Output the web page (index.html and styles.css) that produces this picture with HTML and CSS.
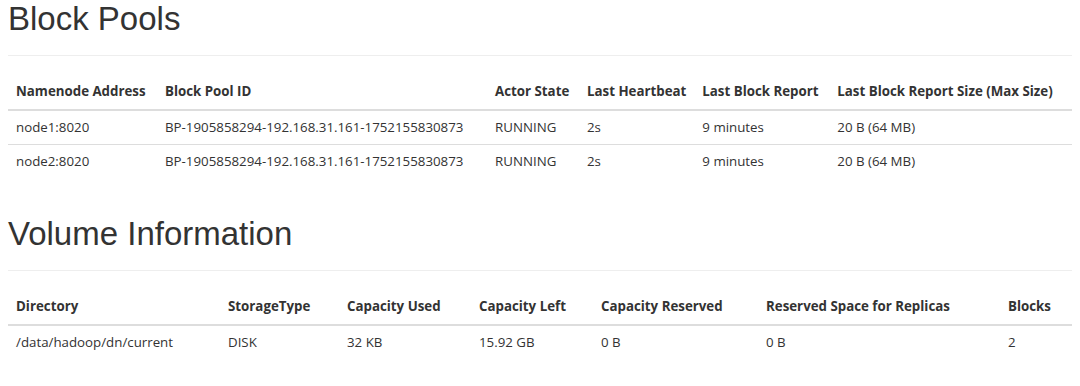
FILE: index.html
```html
<!DOCTYPE html>
<html>
<head>
<meta charset="utf-8">
<link rel="stylesheet" href="styles.css">
</head>
<body>
<div class="page">
  <div class="page-header"><h1>Block Pools</h1></div>
  <table class="tbl pools">
    <thead>
      <tr>
        <th class="c-nn">Namenode Address</th>
        <th class="c-bp">Block Pool ID</th>
        <th class="c-as">Actor State</th>
        <th class="c-hb">Last Heartbeat</th>
        <th class="c-br">Last Block Report</th>
        <th class="c-sz">Last Block Report Size (Max Size)</th>
      </tr>
    </thead>
    <tbody>
      <tr><td>node1:8020</td><td>BP-1905858294-192.168.31.161-1752155830873</td><td>RUNNING</td><td>2s</td><td>9 minutes</td><td>20 B (64 MB)</td></tr>
      <tr><td>node2:8020</td><td>BP-1905858294-192.168.31.161-1752155830873</td><td>RUNNING</td><td>2s</td><td>9 minutes</td><td>20 B (64 MB)</td></tr>
    </tbody>
  </table>

  <div class="page-header second"><h1>Volume Information</h1></div>
  <table class="tbl volumes">
    <thead>
      <tr>
        <th class="c-dir">Directory</th>
        <th class="c-st">StorageType</th>
        <th class="c-cu">Capacity Used</th>
        <th class="c-cl">Capacity Left</th>
        <th class="c-cr">Capacity Reserved</th>
        <th class="c-rs">Reserved Space for Replicas</th>
        <th class="c-bl">Blocks</th>
      </tr>
    </thead>
    <tbody>
      <tr><td>/data/hadoop/dn/current</td><td>DISK</td><td>32 KB</td><td>15.92 GB</td><td>0 B</td><td>0 B</td><td>2</td></tr>
    </tbody>
  </table>
</div>
</body>
</html>
```

FILE: styles.css
```css
html, body {
  margin: 0;
  padding: 0;
  background: #fff;
}

.page {
  padding: 0 8px;
  font-family: "Open Sans", "Liberation Sans", sans-serif;
  font-size: 13.3px;
  color: #333;
}

.page-header {
  border-bottom: 1px solid #eee;
  padding-bottom: 17px;
  margin-bottom: 17px;
}

.page-header.second {
  margin-top: 37px;
}

.page-header h1 {
  margin: 0;
  font-family: "Liberation Sans", Arial, sans-serif;
  font-weight: normal;
  font-size: 33px;
  line-height: 38px;
  color: #333;
}

.tbl {
  width: 100%;
  border-collapse: collapse;
  border-spacing: 0;
}

.tbl th {
  text-align: left;
  font-weight: bold;
  padding: 8px;
  line-height: 20px;
  white-space: nowrap;
  border-bottom: 2px solid #ddd;
  vertical-align: bottom;
}

.tbl td {
  padding: 6px 8px 7px;
  line-height: 20px;
  white-space: nowrap;
  border-top: 1px solid #ddd;
  vertical-align: top;
}

.tbl tbody tr:first-child td {
  border-top: 0;
}

.c-nn { width: 133px; }
.c-bp { width: 314px; }
.c-as { width: 76px; }
.c-hb { width: 99px; }
.c-br { width: 119px; }
.c-sz { width: auto; }

.c-dir { width: 196px; }
.c-st { width: 103px; }
.c-cu { width: 116px; }
.c-cl { width: 106px; }
.c-cr { width: 149px; }
.c-rs { width: 226px; }
.c-bl { width: auto; }
```
